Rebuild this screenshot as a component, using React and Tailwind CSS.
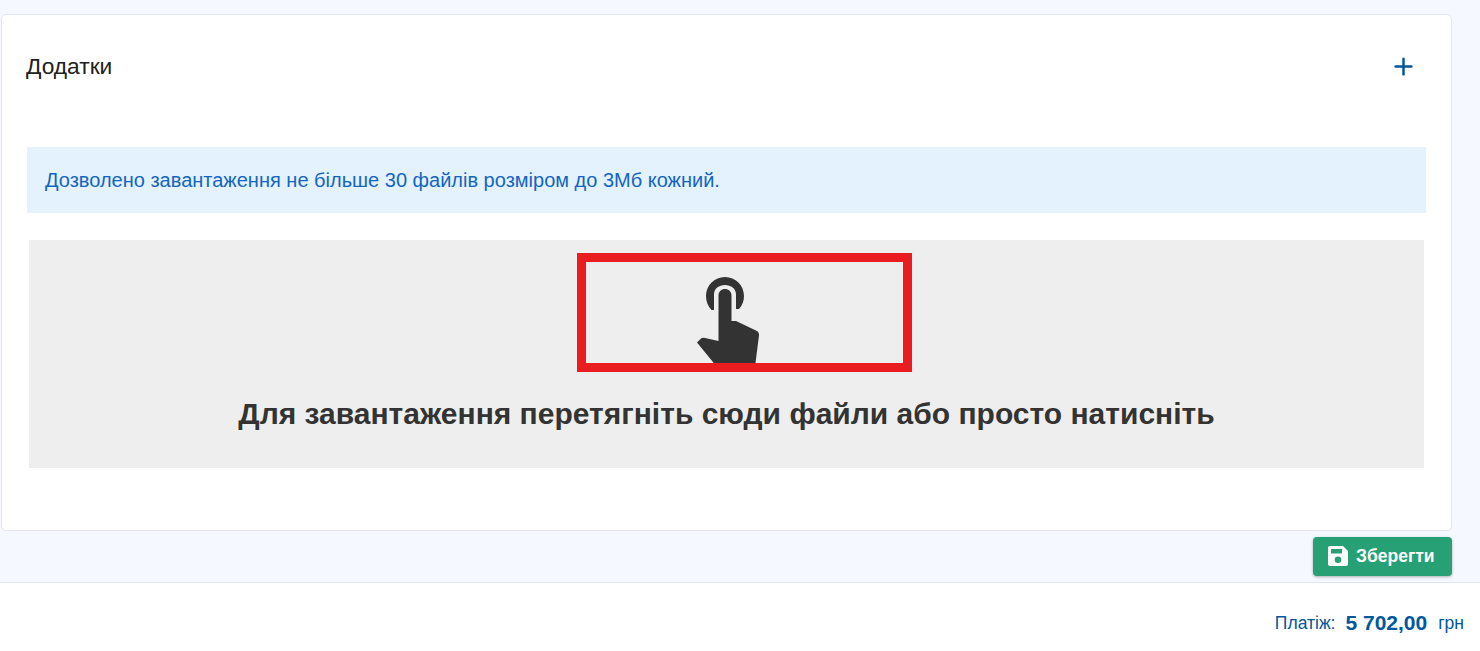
import { Plus } from "lucide-react";

const FONT = { sans: "font-['Liberation_Sans',Arial,sans-serif]" };

// Hand pointer, drawn in page pixels from x=689 y=275, clipped by the red frame
const TapIcon = () => (
  <svg width="110" height="110" viewBox="0 0 110 110" className="mt-[13px] shrink-0 text-[#333333]" fill="currentColor">
    <path d="M21.500 35 C18 31.500 16 26.500 16 21 C16 10.500 24.500 2 35 2 C45.500 2 54 10.500 54 21 C54 26 52.300 30.500 49 34 L46 34 L46 19.500 C46 13.500 41 10 35 10 C29 10 24 13.500 24 19.500 L24 35 Z" />
    <path d="M28.500 20.500 C28.500 16.500 31.500 14 35 14 C38.500 14 41.500 16.500 41.500 20.500 L41.500 46 L46 46 L67 56 C68.500 57 69.200 58.500 69 60.500 L65 92 L27 92 L7 67.500 L11 63.500 C11.800 62.800 13 62.500 14 62.700 L28.500 66 Z" />
  </svg>
);

export default function App() {
  return (
    <div className={`${FONT.sans} flex h-[651px] w-[1480px] flex-col overflow-hidden bg-[#f5f8ff]`}>
      <div className="flex h-[582px] shrink-0 flex-col items-stretch pt-[14px] pr-[28px] pl-[1px]">
        <section className="flex h-[517px] shrink-0 flex-col rounded-[5px] border border-[#e3e6f0] bg-white">
          <header className="flex h-[102px] shrink-0 items-center justify-between pr-[34px] pl-[24px]">
            <h2 className="text-[22.750px] leading-[26px] font-normal text-[#212121]">Додатки</h2>
            <Plus size={27} strokeWidth={2.200} className="text-[#01579b]" />
          </header>
          <div className="mt-[30px] ml-[25px] flex h-[66px] w-[1399px] items-center bg-[#e3f2fd] px-[18px]">
            <p className="text-[20px] leading-[24px] text-[#1565c0]">Дозволено завантаження не більше 30 файлів розміром до 3Мб кожний.</p>
          </div>
          <div className="mt-[27px] ml-[27px] flex h-[228px] w-[1395px] flex-col items-center bg-[#eeeeee] pt-[13px]">
            <div className="ml-[36px] flex h-[119px] w-[335px] shrink-0 justify-center overflow-hidden border-[9px] border-[#e91c20]">
              <TapIcon />
            </div>
            <h3 className="mt-[24px] text-[30px] leading-[36px] font-bold text-[#333333]">Для завантаження перетягніть сюди файли або просто натисніть</h3>
          </div>
        </section>
        <div className="flex justify-end pt-[6px]">
          <button className="flex h-[39px] w-[139px] items-center justify-start gap-[8px] rounded-[4px] bg-[#26a074] pl-[15px] text-[17.500px] font-bold text-white shadow-[0_1px_3px_rgba(0,0,0,0.3)]">
            <svg width="20" height="20" viewBox="0 0 20 20" fill="currentColor" className="mb-[2px]">
              <path fillRule="evenodd" d="M2 0 H15 L20 5 V18 C20 19.100 19.100 20 18 20 H2 C0.900 20 0 19.100 0 18 V2 C0 0.900 0.900 0 2 0 Z M3 3 V7.500 H14 V3 Z M10 10.500 A3.300 3.300 0 1 0 10 17.100 A3.300 3.300 0 1 0 10 10.500 Z" />
            </svg>
            Зберегти
          </button>
        </div>
      </div>
      <footer className="flex flex-1 items-start justify-end border-t border-[#e3e6f0] bg-white pt-[28px] pr-[16px] text-[#01579b]">
        <span className="text-[17.500px] leading-[24px]">Платіж:</span>
        <span className="ml-[10px] text-[21px] leading-[24px] font-bold">5 702,00</span>
        <span className="ml-[11px] text-[17.500px] leading-[24px]">грн</span>
      </footer>
    </div>
  );
}
